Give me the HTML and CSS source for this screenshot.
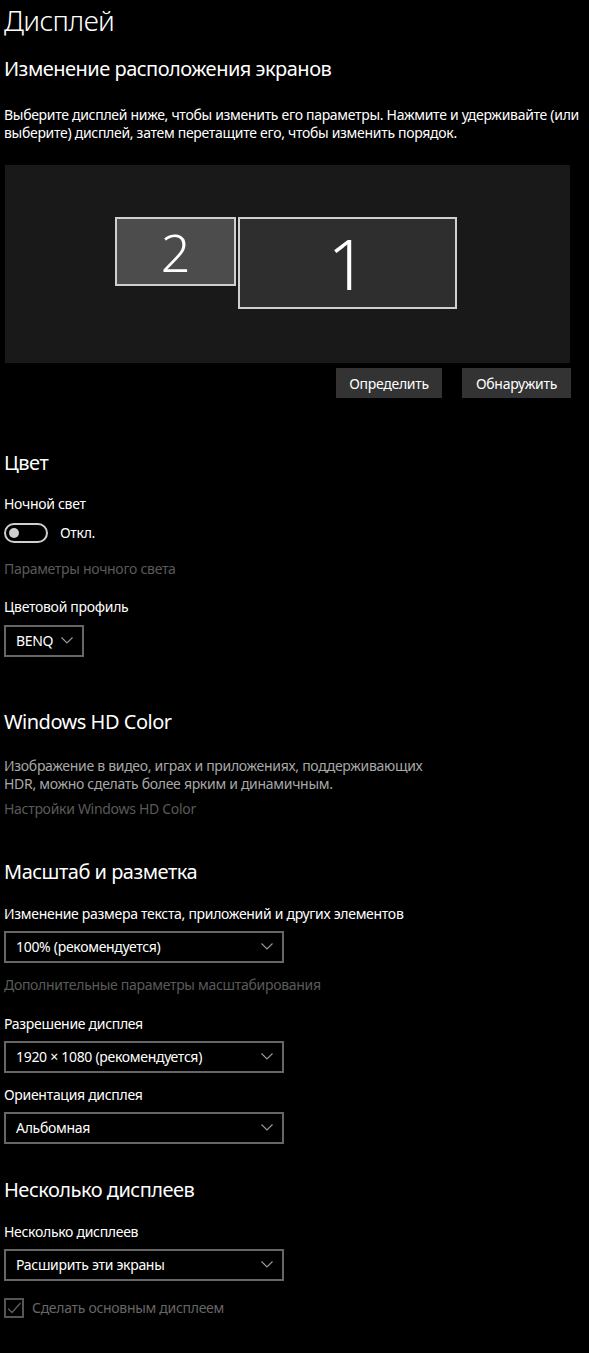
FILE: index.html
```html
<!DOCTYPE html>
<html lang="ru">
<head>
<meta charset="utf-8">
<title>Дисплей</title>
<link rel="stylesheet" href="styles.css">
</head>
<body>
<main class="page">
  <h1 class="title">Дисплей</h1>

  <h2 class="heading h-first">Изменение расположения экранов</h2>
  <p class="desc">Выберите дисплей ниже, чтобы изменить его параметры. Нажмите и удерживайте (или выберите) дисплей, затем перетащите его, чтобы изменить порядок.</p>

  <div class="arrange">
    <div class="monitor monitor-2">2</div>
    <div class="monitor monitor-1">1</div>
  </div>
  <div class="buttons">
    <button class="btn btn-identify">Определить</button>
    <button class="btn btn-detect">Обнаружить</button>
  </div>

  <h2 class="heading h-color">Цвет</h2>
  <div class="label l-night">Ночной свет</div>
  <div class="toggle-row">
    <span class="toggle"><span class="knob"></span></span>
    <span class="toggle-text">Откл.</span>
  </div>
  <div class="link l-nightset">Параметры ночного света</div>
  <div class="label l-profile">Цветовой профиль</div>
  <div class="select select-small">
    <span class="select-text">BENQ</span>
    <svg class="chev" width="12" height="7" viewBox="0 0 12 7"><polyline points="0.5,0.5 6,6 11.5,0.5" fill="none" stroke="#9a9a9a" stroke-width="1.1"/></svg>
  </div>

  <h2 class="heading h-hd">Windows HD Color</h2>
  <p class="sub">Изображение в видео, играх и приложениях, поддерживающих HDR, можно сделать более ярким и динамичным.</p>
  <div class="link l-hdset">Настройки Windows HD Color</div>

  <h2 class="heading h-scale">Масштаб и разметка</h2>
  <div class="label l-size">Изменение размера текста, приложений и других элементов</div>
  <div class="select">
    <span class="select-text">100% (рекомендуется)</span>
    <svg class="chev" width="12" height="7" viewBox="0 0 12 7"><polyline points="0.5,0.5 6,6 11.5,0.5" fill="none" stroke="#9a9a9a" stroke-width="1.1"/></svg>
  </div>
  <div class="link l-scaleset">Дополнительные параметры масштабирования</div>
  <div class="label l-res">Разрешение дисплея</div>
  <div class="select">
    <span class="select-text">1920 × 1080 (рекомендуется)</span>
    <svg class="chev" width="12" height="7" viewBox="0 0 12 7"><polyline points="0.5,0.5 6,6 11.5,0.5" fill="none" stroke="#9a9a9a" stroke-width="1.1"/></svg>
  </div>
  <div class="label l-orient">Ориентация дисплея</div>
  <div class="select">
    <span class="select-text">Альбомная</span>
    <svg class="chev" width="12" height="7" viewBox="0 0 12 7"><polyline points="0.5,0.5 6,6 11.5,0.5" fill="none" stroke="#9a9a9a" stroke-width="1.1"/></svg>
  </div>

  <h2 class="heading h-multi">Несколько дисплеев</h2>
  <div class="label l-multi">Несколько дисплеев</div>
  <div class="select">
    <span class="select-text">Расширить эти экраны</span>
    <svg class="chev" width="12" height="7" viewBox="0 0 12 7"><polyline points="0.5,0.5 6,6 11.5,0.5" fill="none" stroke="#9a9a9a" stroke-width="1.1"/></svg>
  </div>
  <div class="check-row">
    <span class="checkbox">
      <svg width="16" height="16" viewBox="0 0 16 16"><polyline points="2,8.5 6,12.5 14.5,3" fill="none" stroke="#5e5e5e" stroke-width="1.3"/></svg>
    </span>
    <span class="check-text">Сделать основным дисплеем</span>
  </div>
</main>
</body>
</html>
```

FILE: styles.css
```css
html, body {
  margin: 0;
  padding: 0;
  background: #000;
}

body {
  font-family: "Segoe UI", "Noto Sans", "Open Sans", sans-serif;
  color: #fff;
  font-size: 14px;
  letter-spacing: -0.3px;
}

.page {
  padding: 0 0 40px 4px;
  width: 589px;
  box-sizing: border-box;
}

.title {
  margin: 0;
  font-size: 28px;
  line-height: 40px;
  font-weight: 300;
  letter-spacing: -0.6px;
}

.heading {
  margin: 0;
  font-size: 20px;
  line-height: 28px;
  font-weight: 400;
  letter-spacing: -0.5px;
}

.h-first { margin-top: 15px; }
.h-color { margin-top: 51px; }
.h-hd { margin-top: 51px; }
.h-scale { margin-top: 39px; }
.h-multi { margin-top: 32px; }

.desc {
  margin: 23px 0 0;
  line-height: 18px;
}

.arrange {
  position: relative;
  margin: 23px 0 0 1px;
  width: 565px;
  height: 198px;
  background: #191919;
}

.monitor {
  position: absolute;
  box-sizing: border-box;
  border: 2px solid #cfcfcf;
  display: flex;
  align-items: center;
  justify-content: center;
  font-weight: 300;
  color: #fff;
  letter-spacing: 0;
}

.monitor-2 {
  left: 110px;
  top: 52px;
  width: 121px;
  height: 69px;
  background: #4c4c4c;
  font-size: 52px;
}

.monitor-1 {
  left: 233px;
  top: 52px;
  width: 219px;
  height: 92px;
  background: #2e2e2e;
  font-size: 70px;
}

.buttons {
  display: flex;
  justify-content: flex-end;
  gap: 20px;
  margin-top: 5px;
  width: 567px;
}

.btn {
  height: 30px;
  border: none;
  background: #333;
  color: #fff;
  font-family: inherit;
  font-size: 14px;
  letter-spacing: -0.3px;
  padding: 0;
}

.btn-identify { width: 106px; }
.btn-detect { width: 109px; }

.label {
  line-height: 20px;
}

.link {
  line-height: 20px;
  color: #5a5a5a;
}

.l-night { margin-top: 17px; }
.l-nightset { margin-top: 16px; }
.l-profile { margin-top: 18px; }
.l-hdset { margin-top: 6px; }
.l-size { margin-top: 18px; }
.l-scaleset { margin-top: 12px; }
.l-res { margin-top: 19px; }
.l-orient { margin-top: 12px; }
.l-multi { margin-top: 18px; }

.toggle-row {
  display: flex;
  align-items: center;
  gap: 12px;
  margin-top: 9px;
  height: 20px;
}

.toggle {
  width: 44px;
  height: 20px;
  box-sizing: border-box;
  border: 2px solid #cfcfcf;
  border-radius: 10px;
  display: flex;
  align-items: center;
  padding-left: 3px;
}

.knob {
  width: 10px;
  height: 10px;
  border-radius: 50%;
  background: #cfcfcf;
}

.toggle-text {
  line-height: 20px;
}

.select {
  box-sizing: border-box;
  width: 280px;
  height: 32px;
  border: 2px solid #666;
  margin-top: 7px;
  display: flex;
  align-items: center;
  justify-content: space-between;
  padding: 0 9px 1px 10px;
}

.select-small {
  width: 80px;
  margin-top: 8px;
}

.chev {
  display: block;
}

.sub {
  margin: 21px 0 0;
  line-height: 18px;
  color: #a8a8a8;
  width: 445px;
}

.check-row {
  display: flex;
  align-items: center;
  gap: 8px;
  margin-top: 17px;
  height: 20px;
}

.checkbox {
  box-sizing: border-box;
  width: 20px;
  height: 20px;
  border: 2px solid #555;
  display: flex;
  align-items: center;
  justify-content: center;
}

.checkbox svg {
  display: block;
}

.check-text {
  color: #666;
  line-height: 20px;
}
```
